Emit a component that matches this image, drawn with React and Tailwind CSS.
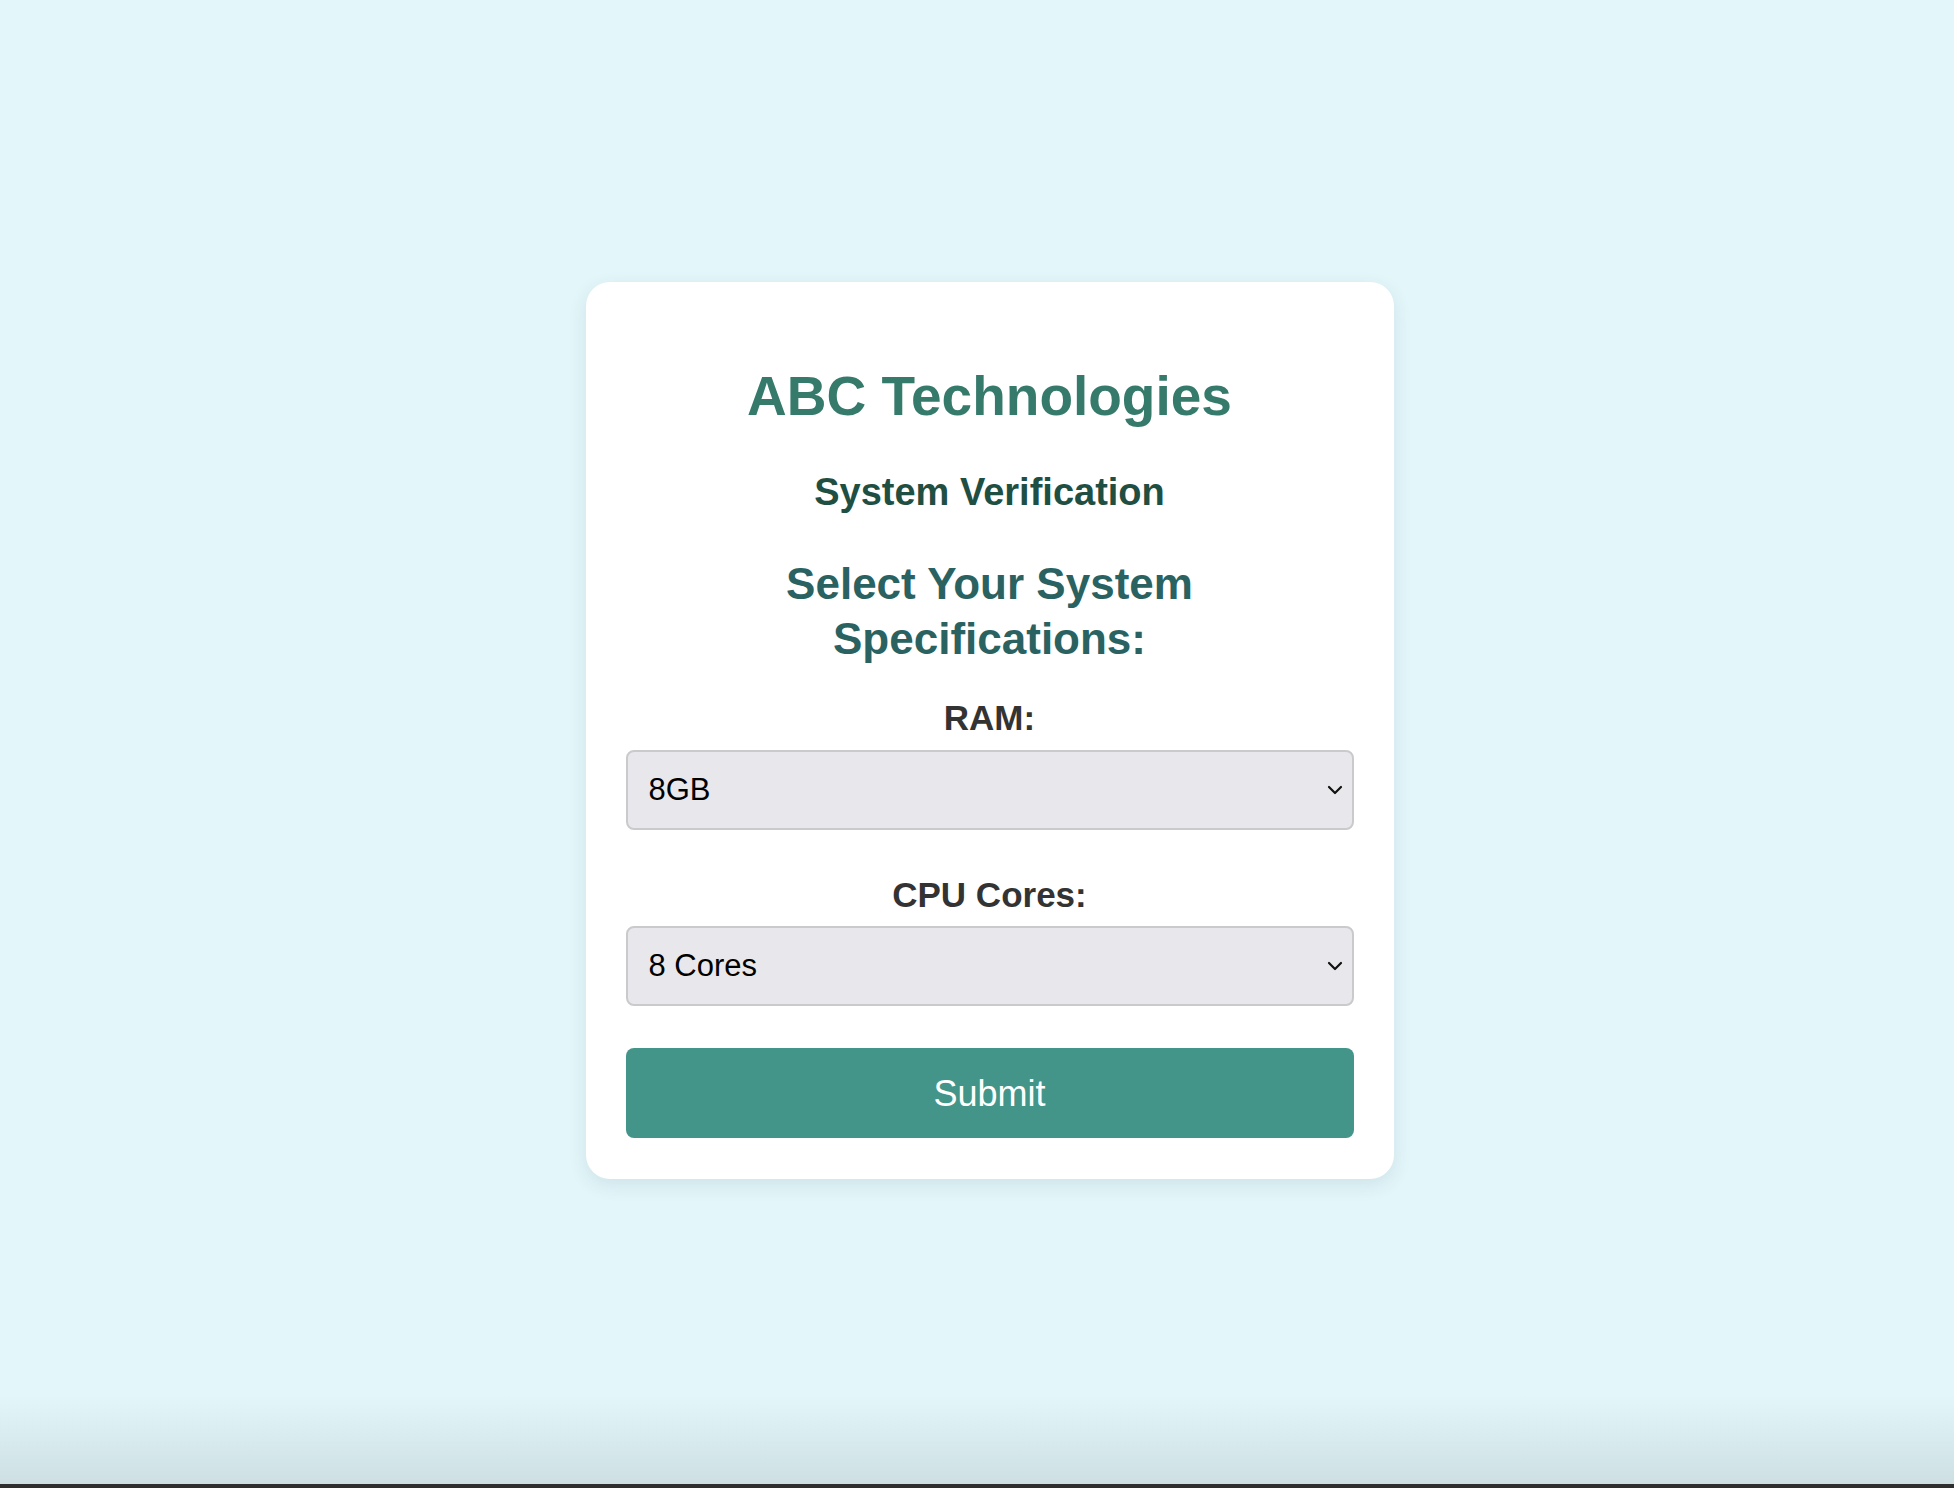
import React from 'react';

const Chevron = () => (
  <svg
    className="pointer-events-none absolute right-[11px] top-1/2 -translate-y-1/2"
    width="16"
    height="10"
    viewBox="0 0 16 10"
    fill="none"
  >
    <polyline points="2,2 8,8 14,2" stroke="#111" strokeWidth="2.2" strokeLinecap="round" strokeLinejoin="round" />
  </svg>
);

function SpecSelect({ value, options }) {
  return (
    <div className="relative w-full">
      <select
        defaultValue={value}
        className="h-[80px] w-full appearance-none rounded-[8px] border-2 border-[#cacacd] bg-[#e8e8ec] pt-[2px] pl-[21px] text-[31px] text-black outline-none"
      >
        {options.map((o) => (
          <option key={o}>{o}</option>
        ))}
      </select>
      <Chevron />
    </div>
  );
}

export default function App() {
  return (
    <div className="h-[1488px] w-full bg-[linear-gradient(to_bottom,#e3f6fa_1395px,#cddfe2_1484px,#2e2e2e_1484px)] font-['Liberation_Sans',Arial,sans-serif]">
      <div className="flex h-[1460px] items-center justify-center pl-[25px]">
        <div className="flex w-[808px] flex-col items-center rounded-[24px] bg-white px-10 pt-10 pb-[41px] shadow-[0_6px_18px_rgba(60,100,110,0.12)]">
          <h1 className="mt-[42px] text-[55px] font-bold leading-[64px] text-[#357a6b]">ABC Technologies</h1>
          <h2 className="mt-[42px] text-[38px] font-bold leading-[44px] text-[#1f4f42]">System Verification</h2>
          <h3 className="mt-[42px] w-[460px] text-center text-[44px] font-bold leading-[55px] text-[#2a6262]">
            Select Your System Specifications:
          </h3>

          <label className="mt-[32px] text-[35px] font-bold leading-[40px] text-[#333]">RAM:</label>
          <div className="mt-[12px] w-full">
            <SpecSelect value="8GB" options={['4GB', '8GB', '16GB', '32GB']} />
          </div>

          <label className="mt-[45px] text-[35px] font-bold leading-[40px] text-[#333]">CPU Cores:</label>
          <div className="mt-[11px] w-full">
            <SpecSelect value="8 Cores" options={['2 Cores', '4 Cores', '8 Cores', '16 Cores']} />
          </div>

          <button className="mt-[42px] h-[90px] w-full rounded-[8px] bg-[#43958a] pt-[3px] text-[36px] text-white">
            Submit
          </button>
        </div>
      </div>
    </div>
  );
}
